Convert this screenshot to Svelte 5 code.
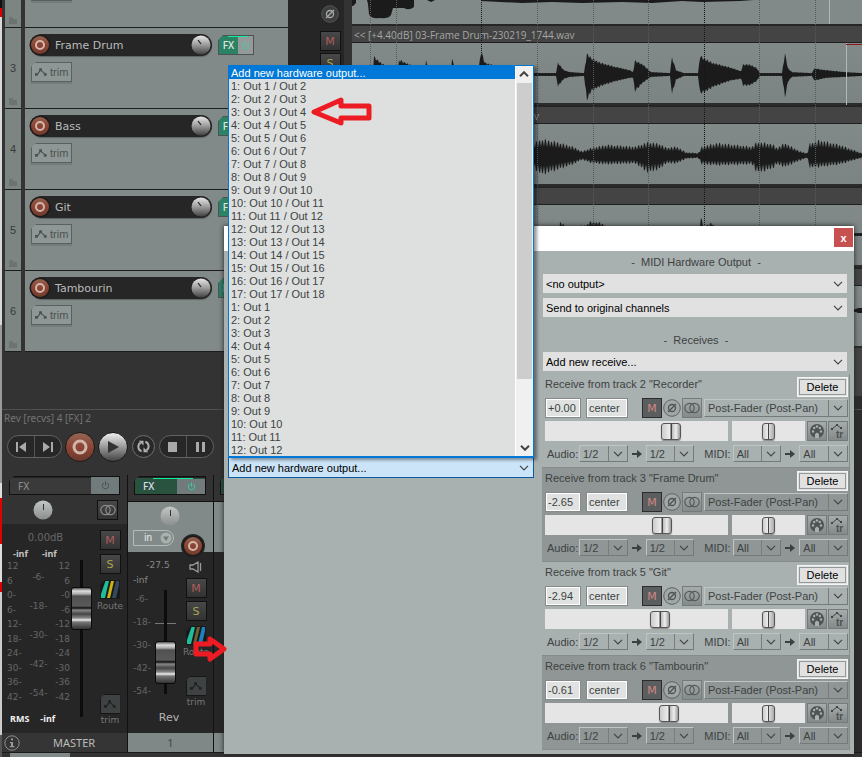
<script lang="ts">
    type Key = [number, number, number];

    const tracks = [
        { id: 2, name: "Recorder" },
        { id: 3, name: "Frame Drum" },
        { id: 4, name: "Bass" },
        { id: 5, name: "Git" },
        { id: 6, name: "Tambourin" },
    ];

    const outputs = [
        "Add new hardware output...",
        ...Array.from({ length: 17 }, (_, i) => `${i + 1}: Out ${i + 1} / Out ${i + 2}`),
        ...Array.from({ length: 12 }, (_, i) => `${i + 1}: Out ${i + 1}`),
    ];

    const receives = [
        { track: 2, name: "Recorder", volume: "+0.00", level: 710 },
        { track: 3, name: "Frame Drum", volume: "-2.65", level: 655 },
        { track: 5, name: "Git", volume: "-2.94", level: 647 },
        { track: 6, name: "Tambourin", volume: "-0.61", level: 697 },
    ];

    const leftScale = ["12", "6", "0-", "6-", "12-", "18-", "24-", "30-", "36-", "42-"];
    const midScale = ["-6-", "-18-", "-30-", "-42-", "-54-"];
    const rightScale = ["12", "6", "-0", "-6", "-12", "-18", "-24", "-30", "-36", "-42"];

    const gridLines = [18, 44, 129, 185, 241, 296, 352, 407, 463];
    const lanes = [0, 81, 162, 243];

    // [x, amplitude up, amplitude down]
    const drum: Key[] = [
        [0, 1, 1], [21, 1, 1], [22, 18, 18], [30, 11, 10], [37, 7, 5], [46, 3, 2], [47, 15, 13], [60, 9, 6], [64, 2, 2],
        [73, 2, 2], [74, 15, 12], [78, 2, 2], [99, 1, 1], [100, 16, 14], [105, 2, 2], [126, 1, 1], [129, 24, 24],
        [133, 12, 12], [142, 9, 8], [152, 2, 2], [180, 1, 1], [204, 1, 1], [206, 12, 12], [212, 4, 4], [218, 2, 2],
        [232, 1, 1], [235, 22, 27], [239, 17, 17], [248, 12, 12], [262, 8, 7], [278, 4, 3], [281, 2, 3], [283, 14, 17],
        [291, 10, 8], [299, 2, 2], [318, 1, 1], [320, 18, 20], [324, 4, 5], [332, 1, 1], [346, 1, 1], [348, 19, 19],
        [353, 16, 18], [360, 12, 13], [378, 7, 6], [389, 3, 4], [391, 10, 11], [398, 10, 11], [405, 6, 6], [408, 1, 1],
        [430, 1, 1], [433, 22, 24], [436, 6, 7], [440, 2, 2], [460, 1, 1], [462, 6, 6], [475, 4, 3], [494, 2, 2], [510, 1, 1],
    ];
    const bass: Key[] = [
        [0, 8, 8], [180, 12, 12], [190, 17, 20], [205, 14, 15], [221, 9, 9], [230, 4, 4], [240, 8, 8], [255, 11, 9],
        [283, 9, 8], [296, 14, 18], [308, 12, 14], [314, 8, 8], [325, 9, 8], [334, 3, 3], [346, 2, 2], [350, 9, 9],
        [365, 13, 10], [400, 9, 9], [405, 14, 18], [420, 12, 14], [425, 8, 9], [433, 13, 12], [448, 4, 5], [455, 2, 2],
        [458, 13, 13], [468, 16, 12], [488, 11, 9], [510, 2, 2],
    ];
    const git: Key[] = [
        [0, 1, 1], [207, 1, 1], [208, 13, 6], [214, 8, 6], [234, 9, 8], [238, 13, 10], [248, 12, 10], [262, 4, 4],
        [346, 2, 2], [349, 17, 12], [352, 8, 8], [360, 12, 8], [366, 3, 3], [510, 1, 1],
    ];
    const tambourin: Key[] = [[0, 1, 1], [504, 1, 1], [506, 2, 2], [510, 2, 2]];

    function wave(keys: Key[], mid: number, rough: number) {
        const up: string[] = [];
        const down: string[] = [];
        let k = 0;
        for (let x = 0; x <= 510; x++) {
            while (k < keys.length - 2 && keys[k + 1][0] <= x) k++;
            const [x0, u0, d0] = keys[k];
            const [x1, u1, d1] = keys[k + 1];
            const t = Math.min(1, Math.max(0, (x - x0) / (x1 - x0)));
            const noise = x % 3 === 0 ? 1 - rough : 1 - rough * 0.3 * Math.abs(Math.sin(x * 0.7));
            up.push(`${x},${(mid - (u0 + (u1 - u0) * t) * noise).toFixed(1)}`);
            down.unshift(`${x},${(mid + (d0 + (d1 - d0) * t) * noise + 1).toFixed(1)}`);
        }
        return [...up, ...down].join(" ");
    }

    const waves = [wave(drum, 74, 0.2), wave(bass, 155, 0.5), wave(git, 234, 0.3), wave(tambourin, 310, 0)];
</script>

{#snippet recordIcon()}
    <svg viewBox="0 0 22 22" class="rec-icon">
        <circle cx="11" cy="11" r="10.5" fill="#1d1a19" />
        <circle cx="11" cy="11" r="9" fill="url(#recFill)" />
        <circle cx="11" cy="11" r="4" fill="none" stroke="#d5b5ac" stroke-width="2" />
    </svg>
{/snippet}

{#snippet power()}
    <svg viewBox="0 0 10 10" class="power">
        <path d="M3 2.2A3.5 3.5 0 1 0 7 2.2M5 .5V5" fill="none" stroke="currentColor" />
    </svg>
{/snippet}

{#snippet envelope()}
    <svg viewBox="0 0 14 10" class="envelope">
        <path d="M2 8L6 3L11 7" fill="none" stroke="currentColor" stroke-width="1.3" />
        <path d="M0 6h3v3H0zM4.5 1h3v3h-3zM9.5 6h3v3h-3z" fill="currentColor" />
    </svg>
{/snippet}

{#snippet rings()}
    <svg viewBox="0 0 16 12" class="rings">
        <g fill="none" stroke="currentColor" stroke-width="1.2"><circle cx="5.5" cy="6" r="4.7" /><circle cx="10.5" cy="6" r="4.7" /></g>
    </svg>
{/snippet}

{#snippet phase()}
    <svg viewBox="0 0 18 18" class="phase">
        <circle cx="9" cy="9" r="8.3" class="phase-disc" />
        <g fill="none" stroke="currentColor" stroke-width="1.3"><circle cx="9" cy="9" r="3.5" /><path d="M5 13L13 5" /></g>
    </svg>
{/snippet}

{#snippet chevron()}
    <svg viewBox="0 0 10 6" class="chevron"><path d="M1 .8L5 4.8L9 .8" fill="none" stroke="currentColor" stroke-width="1.2" /></svg>
{/snippet}

{#snippet routeIcon(last: string, mid: string)}
    <svg viewBox="0 0 20 19" class="route-icon">
        <path d="M5 0H20V19H0V5Z" fill="#191919" />
        <path d="M5.5 1H9L5 18H1V14Z" fill="#20bd9c" />
        <path d="M11 1H14L10 18H7Z" fill={mid} />
        <path d="M16 1H19V5L16 18H12Z" fill={last} />
    </svg>
{/snippet}

{#snippet combo(label: string, text: string, kind: string)}
    <span class="combo {kind}">
        <select aria-label={label}><option>{text}</option></select>
        {@render chevron()}
    </span>
{/snippet}

{#snippet arrow()}
    <svg viewBox="0 0 10 8" class="arrow"><path d="M0 3H5V0L10 4L5 8V5H0Z" fill="#3b4040" /></svg>
{/snippet}

<svg class="defs" aria-hidden="true">
    <defs>
        <linearGradient id="recFill" x2="0" y2="1"><stop offset="0" stop-color="#92624f" /><stop offset=".5" stop-color="#8b4433" /><stop offset="1" stop-color="#713c30" /></linearGradient>
        <linearGradient id="knobFill" x2="0" y2="1"><stop offset="0" stop-color="#e8e8e8" /><stop offset=".5" stop-color="#9a9a9a" /><stop offset="1" stop-color="#424242" /></linearGradient>
        <linearGradient id="panFill" x2="0" y2="1"><stop offset="0" stop-color="#c3c7c6" /><stop offset="1" stop-color="#8a8f8e" /></linearGradient>
    </defs>
</svg>

<div class="app">
    <div class="edge"></div>
    <main>
        <div class="upper">
            <div class="tcp">
                {#each tracks as track}
                    <div class="track">
                        <div class="track-number">
                            <span>{track.id}</span>
                            <svg viewBox="0 0 8 7" class="folder"><path d="M0 0H4V2H8V7H0Z" fill="#6c7472" /></svg>
                        </div>
                        <div class="track-panel">
                            <div class="track-line">
                                <div class="name-bar">
                                    <button aria-label="Record arm">{@render recordIcon()}</button>
                                    <span>{track.name}</span>
                                    <button class="knob" aria-label="Volume">
                                        <svg viewBox="0 0 22 22">
                                            <circle cx="11" cy="11" r="10.5" fill="#262626" />
                                            <circle cx="11" cy="11" r="9.5" fill="url(#knobFill)" />
                                            <path d="M8 6L11 10" stroke="#222" stroke-width="1.2" />
                                        </svg>
                                    </button>
                                </div>
                                <button class="fx-chip" aria-label="FX"><b>FX</b><i>{@render power()}</i></button>
                            </div>
                            <button class="trim-chip">{@render envelope()}trim</button>
                        </div>
                    </div>
                {/each}
            </div>
            <div class="side">
                <button class="plain" aria-label="Phase">{@render phase()}</button>
                <button class="sq mute">M</button>
                <button class="sq solo">S</button>
            </div>
            <div class="arrange">
                {#each lanes as lane}
                    <div class="item-title">
                        {#if lane === 0}&lt;&lt; [+4.40dB] 03-Frame Drum-230219_1744.wav{:else if lane === 81}<span class="item-tail">v</span>{/if}
                    </div>
                    <div class="item-body"></div>
                {/each}
                <svg class="waves" width="510" height="352" viewBox="0 0 510 352">
                    <g fill="#1b1b1b">
                        <path d="M0 0H4V3L1 6H0ZM15 0H62V7Q57 11 52 8H41L39 15Q36 19 28 18Q18 19 17 14L16 4ZM75 0H83L79 2ZM129 0H402L388 1L350 2L330 1L300 3L270 2L230 3L200 2L170 3L129 1Z" />
                        {#each waves as points}<polygon {points} />{/each}
                    </g>
                    {#each gridLines as x}
                        <path d="M{x}.5 0V340" stroke={x === 129 || x === 352 ? "#161616" : "#555c5b"} stroke-dasharray="1 1" />
                    {/each}
                    <path d="M477.5 0V24M494.5 43V105" stroke="#b3b8b7" />
                    <path d="M494 44.5H510" stroke="#8e1318" />
                </svg>
            </div>
        </div>

        <div class="transport">
            <p>Rev [recvs] 4 [FX] 2</p>
            <div class="transport-buttons">
                <div class="pill">
                    <button aria-label="Go to start"><svg viewBox="0 0 12 10"><path d="M1 0H3V10H1ZM11 0V10L4 5Z" fill="#a9a9a9" /></svg></button>
                    <button aria-label="Go to end"><svg viewBox="0 0 12 10"><path d="M9 0H11V10H9ZM1 0V10L8 5Z" fill="#a9a9a9" /></svg></button>
                </div>
                <button class="round big red" aria-label="Record">
                    <svg viewBox="0 0 28 28"><circle cx="14" cy="14" r="6" fill="none" stroke="#d3b4aa" stroke-width="3" /></svg>
                </button>
                <button class="round big silver" aria-label="Play">
                    <svg viewBox="0 0 28 28"><path d="M9 8L20 14L9 20Z" fill="#333" /></svg>
                </button>
                <button class="round" aria-label="Repeat">
                    <svg viewBox="0 0 22 22">
                        <g fill="none" stroke="#b0b0b0" stroke-width="2"><path d="M9 16A5 5 0 0 1 8 7" /><path d="M13 6A5 5 0 0 1 14 15" /></g>
                        <path d="M6 5H11V10ZM16 17H11V12Z" fill="#b0b0b0" />
                    </svg>
                </button>
                <div class="pill">
                    <button aria-label="Stop"><svg viewBox="0 0 12 10"><path d="M1 0H10V10H1Z" fill="#a9a9a9" /></svg></button>
                    <button aria-label="Pause"><svg viewBox="0 0 12 10"><path d="M2 0H5V10H2ZM8 0H11V10H8Z" fill="#a9a9a9" /></svg></button>
                </div>
            </div>
        </div>

        <div class="mixer">
            <section class="strip master">
                <button class="fx-bar" aria-label="Master FX"><b>FX</b><i>{@render power()}</i></button>
                <div class="strip-head">
                    <button class="pan" aria-label="Pan">
                        <svg viewBox="0 0 20 20"><circle cx="10" cy="10" r="9.5" fill="url(#panFill)" /><path d="M10.5 4V10" stroke="#333" /></svg>
                    </button>
                    <button class="sq" aria-label="Stereo">{@render rings()}</button>
                </div>
                <div class="strip-body">
                    <div class="meter">
                        <div class="db">0.00dB</div>
                        <div class="peaks"><b>-inf</b><b>-inf</b></div>
                        <div class="scales">
                            <div class="scale">{#each leftScale as mark}<span>{mark}</span>{/each}</div>
                            <div class="scale mid">{#each midScale as mark}<span>{mark}</span>{/each}</div>
                            <div class="scale end">{#each rightScale as mark}<span>{mark}</span>{/each}</div>
                        </div>
                        <div class="rms"><b>RMS</b><b>-inf</b></div>
                    </div>
                    <input class="fader" type="range" aria-label="Master volume" value="76" />
                    <div class="strip-buttons">
                        <button class="sq mute">M</button>
                        <button class="sq solo">S</button>
                        <button class="route">{@render routeIcon("#34495a", "#c9b414")}Route</button>
                        <button class="trim">{@render envelope()}<span>trim</span></button>
                    </div>
                </div>
                <footer>
                    <svg viewBox="0 0 16 16" class="info">
                        <circle cx="8" cy="8" r="7.2" fill="none" stroke="#8d8d8d" />
                        <path d="M7 3.5H9V5.2H7ZM6 7H9V11H10.5V12.2H5.8V11H7V8.2H6Z" fill="#999" />
                    </svg>
                    <span>MASTER</span>
                </footer>
            </section>

            <section class="strip rev">
                <button class="fx-bar on" aria-label="Rev FX"><b>FX</b><i>{@render power()}</i></button>
                <div class="strip-head">
                    <button class="pan" aria-label="Pan">
                        <svg viewBox="0 0 20 20"><circle cx="10" cy="10" r="9.5" fill="url(#panFill)" /><path d="M10.5 4V10" stroke="#333" /></svg>
                    </button>
                    <button class="input">
                        in
                        <svg viewBox="0 0 12 12"><circle cx="6" cy="6" r="5.5" fill="#a9b0ae" /><path d="M3 4.5H9L6 9Z" fill="#727b79" /></svg>
                    </button>
                    <button class="arm" aria-label="Record arm">{@render recordIcon()}</button>
                </div>
                <div class="strip-body">
                    <div class="level">
                        <div>-27.5</div>
                        <div class="left">-inf</div>
                        <div class="fader-row">
                            <div class="scale mid">{#each midScale as mark}<span>{mark}</span>{/each}</div>
                            <input class="fader" type="range" aria-label="Rev volume" value="17" />
                        </div>
                        <div class="strip-name">Rev</div>
                    </div>
                    <div class="strip-buttons">
                        <svg viewBox="0 0 14 12" class="speaker">
                            <path d="M1 4H4L9 1V11L4 8H1ZM11.5 2V10" fill="none" stroke="#9a9a9a" stroke-width="1.3" />
                        </svg>
                        <button class="sq mute">M</button>
                        <button class="sq solo">S</button>
                        <button class="route">{@render routeIcon("#1d7fc4", "#6a6033")}Route</button>
                        <button class="trim">{@render envelope()}<span>trim</span></button>
                    </div>
                </div>
                <footer>1</footer>
            </section>

            <section class="strip rest">
                <button class="fx-bar on" aria-label="FX"></button>
                <div class="strip-head"></div>
                <div class="strip-body"></div>
                <footer></footer>
            </section>
        </div>
        <div class="bottom"><span></span></div>
    </main>

    <div class="dialog" role="dialog" aria-label="Routing">
        <div class="title-bar"><button aria-label="Close">x</button></div>
        <div class="dialog-body">
            <div class="sends">
                <div class="picker">
                    {@render combo("Hardware output", "Add new hardware output...", "open")}
                    <div class="popup">
                        <ul role="listbox" aria-label="Hardware outputs">
                            {#each outputs as output, i}
                                <li role="option" aria-selected={i === 0} class:selected={i === 0}>{output}</li>
                            {/each}
                        </ul>
                        <div class="scrollbar">
                            <span class="flip">{@render chevron()}</span>
                            <div class="thumb"></div>
                            <span>{@render chevron()}</span>
                        </div>
                    </div>
                </div>
            </div>
            <div class="receives">
                <h2>-&nbsp; MIDI Hardware Output &nbsp;-</h2>
                {@render combo("MIDI output", "<no output>", "wide")}
                {@render combo("MIDI channels", "Send to original channels", "wide")}
                <h2 class="second">-&nbsp; Receives &nbsp;-</h2>
                {@render combo("New receive", "Add new receive...", "wide")}
                <div class="blocks">
                    {#each receives as receive, i}
                        <div class="block" class:dark={i % 2 === 1}>
                            <div class="row first">
                                <span>Receive from track {receive.track} "{receive.name}"</span>
                                <button class="delete">Delete</button>
                            </div>
                            <div class="row">
                                <input class="value" aria-label="Volume" value={receive.volume} />
                                <input class="value wider" aria-label="Pan" value="center" />
                                <button class="m">M</button>
                                <button class="plain" aria-label="Phase">{@render phase()}</button>
                                <button class="small" aria-label="Mono">{@render rings()}</button>
                                {@render combo("Send mode", "Post-Fader (Post-Pan)", "flat grow")}
                            </div>
                            <div class="row third">
                                <input type="range" class="slider" aria-label="Receive level" min="0" max="1000" value={receive.level} />
                                <input type="range" class="slider narrow" aria-label="Receive pan" value="50" />
                                <button class="small" aria-label="MIDI settings">
                                    <svg viewBox="0 0 16 16" width="16" height="16">
                                        <circle cx="8" cy="8" r="7" fill="#4e5453" />
                                        <g fill="#a9afae"><circle cx="4" cy="8.5" r="1.2" /><circle cx="5.2" cy="5" r="1.2" /><circle cx="8" cy="3.5" r="1.2" /><circle cx="10.8" cy="5" r="1.2" /><circle cx="12" cy="8.5" r="1.2" /><path d="M6 15V11L8 9.5L10 11V15Z" /></g>
                                    </svg>
                                </button>
                                <button class="small" aria-label="Envelope">
                                    <svg viewBox="0 0 18 18" width="18" height="18">
                                        <path d="M3 7L8 3L12 6" fill="none" stroke="#3f4545" />
                                        <path d="M2 6h2v2H2zM7 2h2v2H7zM11 5h2v2h-2z" fill="#3f4545" />
                                        <text x="7" y="16" class="tr">tr</text>
                                    </svg>
                                </button>
                            </div>
                            <div class="row fourth">
                                <span class="caption">Audio:</span>
                                {@render combo("Audio source", "1/2", "flat short")}
                                {@render arrow()}
                                {@render combo("Audio destination", "1/2", "flat short")}
                                <span class="caption midi">MIDI:</span>
                                {@render combo("MIDI source", "All", "flat short")}
                                {@render arrow()}
                                {@render combo("MIDI destination", "All", "flat short")}
                            </div>
                        </div>
                    {/each}
                </div>
            </div>
        </div>
    </div>

    <svg class="mark mark-list" viewBox="0 0 62 30" width="62" height="30">
        <path d="M3 15L30 3V9H58V21H30V26Z" fill="none" stroke="#ed1c24" stroke-width="5" stroke-linejoin="round" />
    </svg>
    <svg class="mark mark-route" viewBox="0 0 36 26" width="36" height="26">
        <path d="M4 8H18V3L32 13L18 23V18H4Z" fill="none" stroke="#ed1c24" stroke-width="5" stroke-linejoin="round" />
    </svg>
</div>

<style>
    :global(body) {
        background: #333;
    }

    .app {
        position: relative;
        display: flex;
        min-height: 100vh;
        overflow: hidden;
        background: #333;
        font-family: "Liberation Sans", Arial, sans-serif;
        font-size: 11px;
        color: #777;
    }

    button,
    input,
    select {
        box-sizing: border-box;
        margin: 0;
        padding: 0;
        border: 0;
        border-radius: 0;
        background: none;
        font: inherit;
        color: inherit;
    }

    svg {
        display: block;
        flex: none;
    }

    .defs {
        position: absolute;
        width: 0;
        height: 0;
    }

    .edge {
        width: 2px;
        background: linear-gradient(#111 8px, #d00 8px 17px, #d8d8d8 17px 325px, #9a9a9a 325px 483px, #ddd 483px 498px, #e00000 498px 544px, #ddd 544px 582px, #d00 582px 592px, #ccc 592px 735px, #555 735px);
    }

    main {
        flex: 1;
        min-width: 0;
    }

    .upper {
        display: flex;
        height: 409px;
        overflow: hidden;
        background: #333;
    }

    .tcp {
        width: 286px;
        margin-top: -53px;
        padding-left: 3px;
        box-sizing: border-box;
    }

    .track {
        display: flex;
        gap: 4px;
        height: 81px;
    }

    .track-number {
        display: flex;
        flex-direction: column;
        align-items: center;
        justify-content: space-between;
        width: 16px;
        padding: 34px 0 3px;
        box-sizing: border-box;
        border-bottom: 1px solid #1c1c1c;
        background: #7d8583;
        color: #363b3a;
    }

    .folder {
        width: 8px;
        height: 7px;
    }

    .track-panel {
        flex: 1;
        padding: 6px 0 0 6px;
        border-bottom: 1px solid #1c1c1c;
        background: #818a88;
    }

    .track-line {
        display: flex;
        align-items: center;
        gap: 6px;
        margin-bottom: 6px;
    }

    .name-bar {
        display: flex;
        align-items: center;
        width: 181px;
        height: 22px;
        border-radius: 11px;
        background: #262626;
        box-shadow: 0 1px 1px #5d6462;
    }

    .name-bar span {
        flex: 1;
        padding-left: 4px;
        font-family: "DejaVu Sans", sans-serif;
        color: #b9bbba;
    }

    .rec-icon,
    .knob svg {
        width: 22px;
        height: 22px;
    }

    .name-bar button {
        margin-left: -2px;
    }

    .fx-chip {
        display: flex;
        width: 36px;
        height: 20px;
        border: 1px solid #4c5352;
        background: #939a99;
        clip-path: polygon(5px 0, 100% 0, 100% 100%, 0 100%, 0 5px);
        color: #3fd3a6;
    }

    .fx-chip b,
    .fx-bar b {
        font-family: "Noto Sans", sans-serif;
        font-size: 10px;
        line-height: 18px;
        font-weight: 500;
    }

    .fx-chip b {
        flex: 1;
        background: linear-gradient(90deg, transparent 9px, #10ef9b 9px) top / 100% 1px no-repeat, #2c8264;
        color: #e2e8e5;
    }

    .fx-chip i {
        display: grid;
        place-items: center;
        width: 15px;
        height: 18px;
        background: linear-gradient(90deg, #10ef9b 10px, transparent 10px) top / 100% 1px no-repeat;
    }

    .power {
        width: 9px;
        height: 9px;
    }

    .trim-chip {
        display: flex;
        align-items: center;
        gap: 2px;
        width: 41px;
        height: 20px;
        padding-left: 3px;
        border: 1px solid #596160;
        background: #8f9796;
        box-shadow: 0 2px 0 #747c7a;
        color: #4b5251;
        clip-path: polygon(5px 0, 100% 0, 100% 22px, 0 22px, 0 5px);
    }

    .envelope {
        width: 13px;
        height: 10px;
    }

    .side {
        display: flex;
        flex-direction: column;
        align-items: center;
        gap: 2px;
        width: 28px;
        padding: 5px 0 0 28px;
        border-right: 8px solid #333;
        background: #262626;
        color: #aaa;
    }

    .side .plain {
        margin-bottom: 6px;
    }

    .phase {
        width: 18px;
        height: 18px;
    }

    .phase-disc {
        fill: #3c3e3e;
        stroke: #555;
    }

    .sq {
        display: grid;
        place-items: center;
        width: 21px;
        height: 20px;
        flex: none;
        border: 1px solid #111;
        background: linear-gradient(#484848, #333);
        font-family: "DejaVu Sans", sans-serif;
        font-size: 11px;
        color: #8c8c8c;
    }

    .mute {
        color: #ad5c5b;
    }

    .solo {
        color: #aaa54b;
    }

    .rings {
        width: 16px;
        height: 12px;
    }

    .arrange {
        position: relative;
        flex: 1;
        overflow: hidden;
        padding-top: 24px;
        background: linear-gradient(#818a88 24px, #444 24px 396px, #2d2d2d 396px);
    }

    .item-title {
        height: 16px;
        padding-left: 2px;
        border-top: 2px solid #262626;
        border-bottom: 1px solid #1f1f1f;
        background: #444;
        font-family: "Open Sans", sans-serif;
        font-size: 10px;
        line-height: 18px;
        color: #a4a8a7;
    }

    .item-tail {
        padding-left: 180px;
    }

    .item-body {
        height: 60px;
        border-bottom: 2px solid #2b2d2d;
        background: linear-gradient(#818a88, #7b8483);
    }

    .waves {
        position: absolute;
        left: 0;
        top: 0;
    }

    .transport {
        height: 66px;
        padding-left: 2px;
        border-top: 1px solid #505050;
        box-sizing: border-box;
        background: linear-gradient(90deg, #333 80%, #2d2d2d 80%);
    }

    .transport p {
        margin: 0;
        line-height: 16px;
        font-family: "Noto Sans", sans-serif;
        font-size: 10px;
        color: #747474;
    }

    .transport-buttons {
        display: flex;
        align-items: center;
        gap: 3px;
        height: 41px;
        padding-left: 3px;
    }

    .pill {
        display: flex;
        width: 55px;
        height: 23px;
        border: 1px solid #626262;
        border-radius: 12px;
        box-sizing: border-box;
        background: #272727;
    }

    .pill button {
        display: grid;
        place-items: center;
        flex: 1;
    }

    .pill button + button {
        border-left: 1px solid #555;
    }

    .pill svg {
        width: 12px;
        height: 10px;
    }

    .round {
        width: 23px;
        height: 23px;
        margin: 0 1px;
        border: 1px solid #707070;
        border-radius: 50%;
        background: #292929;
    }

    .big {
        width: 30px;
        height: 30px;
        margin: 0;
        border: 1px solid #1b1b1b;
    }

    .red {
        background: linear-gradient(#946554, #8c4535 50%, #6c392e);
    }

    .silver {
        background: linear-gradient(#eee, #999 50%, #444);
    }

    .mixer {
        display: flex;
        background: #2d2d2d;
    }

    .strip {
        display: flex;
        flex-direction: column;
        width: 125px;
        border-right: 1px solid #111;
        background: #262626;
    }

    .rev {
        width: 85px;
    }

    .rest {
        width: 60px;
        overflow: hidden;
    }

    .fx-bar {
        position: relative;
        display: flex;
        width: 111px;
        height: 19px;
        margin: 1px 0 0 7px;
        border: 1px solid #111;
        background: #3a3a3a;
        box-shadow: inset 0 1px #222;
        clip-path: polygon(5px 0, 100% 0, 100% 100%, 0 100%, 0 5px);
        color: #858a89;
    }

    .rev .fx-bar,
    .rest .fx-bar {
        width: 72px;
        margin-left: 6px;
    }

    .fx-bar b {
        flex: 1;
        padding-left: 8px;
        text-align: left;
    }

    .fx-bar i {
        display: grid;
        place-items: center;
        width: 28px;
        height: 17px;
        background: #727b7b;
        color: #454a4a;
    }

    .fx-bar.on {
        background: linear-gradient(90deg, transparent 18px, #10ef9b 18px 58px, transparent 58px) top / 100% 2px no-repeat, #29533f;
        color: #dde;
    }

    .fx-bar.on i {
        margin-top: 2px;
        height: 15px;
        color: #2bdca6;
    }

    .strip-head {
        display: flex;
        align-items: center;
        justify-content: space-between;
        height: 29px;
        padding: 0 9px 0 31px;
        background: #333;
        box-shadow: 0 -20px 0 #333;
    }

    .pan,
    .pan svg {
        width: 20px;
        height: 20px;
    }

    .rev .strip-head,
    .rest .strip-head {
        flex-wrap: wrap;
        align-content: flex-start;
        height: 51px;
        margin-top: 6px;
        padding: 4px 9px 0 5px;
        box-sizing: border-box;
        border-top: 1px solid #111;
        background: #818a88;
        box-shadow: 0 -26px 0 #333;
    }

    .rev .pan {
        margin: 0 20px 3px 27px;
    }

    .input {
        display: flex;
        align-items: center;
        justify-content: flex-end;
        gap: 8px;
        width: 41px;
        height: 16px;
        border: 1px solid #b5bbb9;
        border-radius: 0 8px 8px 0;
        padding-right: 1px;
        font-size: 10px;
        color: #e8eceb;
    }

    .input svg {
        width: 12px;
        height: 12px;
    }

    .arm {
        align-self: flex-start;
        height: 22px;
        margin: 6px 0 -11px;
        border-radius: 50%;
        background: #262626;
        box-shadow: 0 0 0 1px #262626;
    }

    .strip-body {
        display: flex;
        flex: 1;
        box-sizing: border-box;
    }

    .master .strip-body {
        min-height: 209px;
        padding: 6px 0 0 2px;
    }

    .meter {
        width: 66px;
    }

    .db {
        padding: 0 0 4px 17px;
        line-height: 15px;
        text-align: center;
        font-family: "DejaVu Sans", sans-serif;
        font-size: 10px;
        color: #686868;
    }

    .peaks,
    .rms {
        display: flex;
        gap: 14px;
        padding-left: 9px;
        font-family: "Noto Sans", sans-serif;
        font-size: 9px;
        line-height: 10px;
        color: #c5c5c5;
    }

    .rms {
        padding: 6px 0 0 6px;
        gap: 11px;
        color: #f0f0f0;
    }

    .scales {
        display: flex;
        align-items: flex-start;
        justify-content: space-between;
        padding-left: 3px;
    }

    .scale {
        display: flex;
        flex-direction: column;
        justify-content: space-between;
        height: 145px;
        font-family: "DejaVu Sans", sans-serif;
        font-size: 9px;
        line-height: 14px;
        color: #666;
    }

    .scale.end {
        text-align: right;
    }

    .scale.mid {
        height: auto;
        line-height: 29px;
        padding-top: 4px;
        text-align: center;
    }

    .fader {
        appearance: none;
        writing-mode: vertical-lr;
        direction: rtl;
        width: 21px;
        height: 157px;
        margin: 30px 5px 0 1px;
        background: linear-gradient(#0c0c0c, #0c0c0c) center / 3px 100% no-repeat;
    }

    .fader::-webkit-slider-thumb {
        appearance: none;
        box-sizing: border-box;
        width: 21px;
        height: 43px;
        border: 1px solid #0a0a0a;
        border-radius: 3px;
        background: linear-gradient(#555, #ddd 3px, #aaa 6px, #505050 8px, #5a5a5a 18px, #111 20px, #888 22px, #444 26px, #888 30px, #eee 32px, #777 34px, #333);
    }

    .strip-buttons {
        display: flex;
        flex-direction: column;
        align-items: center;
        gap: 4px;
        font-family: "DejaVu Sans", sans-serif;
        font-size: 9px;
        color: #777;
    }

    .master .strip-buttons {
        height: 196px;
    }

    .route {
        padding-top: 2px;
    }

    .route-icon {
        width: 20px;
        height: 19px;
        margin: 0 auto 2px;
    }

    .trim .envelope {
        box-sizing: border-box;
        width: 21px;
        height: 20px;
        padding: 3px;
        border: 1px solid #161616;
        background: #3e4242;
        color: #222;
        clip-path: polygon(5px 0, 100% 0, 100% 100%, 0 100%, 0 5px);
    }

    .trim {
        margin-top: auto;
    }

    .trim span {
        line-height: 12px;
    }

    footer {
        display: flex;
        align-items: center;
        height: 19px;
        background: #353535;
        font-family: "Noto Sans", sans-serif;
        color: #bbb;
    }

    .info {
        width: 16px;
        height: 16px;
        margin: 0 33px 0 2px;
    }

    .rev footer,
    .rest footer {
        justify-content: center;
        background: #7f8886;
        color: #3f4443;
    }

    .level {
        width: 50px;
        padding: 6px 0 0 5px;
        font-family: "DejaVu Sans", sans-serif;
        font-size: 9px;
        line-height: 15px;
        text-align: center;
        color: #888;
    }

    .left {
        text-align: left;
    }

    .fader-row {
        display: flex;
    }

    .fader-row .scale.mid {
        line-height: 23px;
        padding: 0;
    }

    .fader-row .fader {
        height: 104px;
        margin: 2px 0 0 4px;
        background: linear-gradient(#0c0c0c, #0c0c0c) center / 3px 100% no-repeat, linear-gradient(transparent 33px, #777 33px 34px, transparent 34px);
    }

    .strip-name {
        padding: 7px 0 0 22px;
        font-size: 11px;
        color: #b5b5b5;
    }

    .rev .strip-buttons {
        gap: 3px;
        height: 147px;
        margin-top: 9px;
    }

    .speaker {
        width: 14px;
        height: 12px;
        margin-bottom: 2px;
    }

    .bottom {
        height: 5px;
        border-top: 1px solid #1b1b1b;
        box-sizing: border-box;
    }

    .bottom span {
        display: block;
        width: 60px;
        height: 4px;
        margin-left: 8px;
        background: #808987;
    }

    .dialog {
        position: absolute;
        left: 224px;
        right: 8px;
        top: 226px;
        background: #a9b0b0;
        color: #3d4242;
        box-shadow: 0 0 5px #222;
    }

    .title-bar {
        display: flex;
        justify-content: flex-end;
        height: 25px;
        background: #fff;
    }

    .title-bar button {
        width: 19px;
        height: 19px;
        margin: 2px 1px;
        background: #c75050;
        font-weight: bold;
        color: #fff;
    }

    .dialog-body {
        display: grid;
        grid-template-columns: minmax(0, 1fr) minmax(0, 1fr);
        gap: 9px;
        padding: 0 5px 4px 4px;
    }

    .picker {
        position: relative;
        margin-top: 206px;
    }

    .combo {
        position: relative;
        display: flex;
        align-items: center;
        box-sizing: border-box;
    }

    .combo select {
        appearance: none;
        width: 100%;
        height: 100%;
        padding-left: 3px;
    }

    .chevron {
        width: 10px;
        height: 6px;
        color: #444;
    }

    .combo .chevron {
        position: absolute;
        right: 4px;
        pointer-events: none;
    }

    .open {
        height: 21px;
        border: 1px solid #0a5a9f;
        background: #cce4f7;
        color: #000;
    }

    .popup {
        position: absolute;
        left: 0;
        right: 0;
        bottom: 20px;
        display: flex;
        border: 1px solid #0078d7;
        border-bottom-width: 2px;
        background: #dde0df;
        box-shadow: 3px 2px 3px #0006;
    }

    .popup ul {
        flex: 1;
        margin: 0;
        padding: 0;
        list-style: none;
    }

    .popup li {
        height: 13px;
        padding-left: 2px;
        line-height: 15px;
        white-space: nowrap;
    }

    .popup .selected {
        background: #0078d7;
        color: #fff;
    }

    .scrollbar {
        display: flex;
        flex-direction: column;
        width: 15px;
        padding: 0 1px;
        border-left: 1px solid #fff;
        background: #f0f0f0;
    }

    .scrollbar span {
        display: grid;
        place-items: center;
        height: 17px;
    }

    .flip {
        transform: rotate(180deg);
    }

    .scrollbar path {
        stroke-width: 2;
    }

    .thumb {
        flex: none;
        height: 296px;
        margin-bottom: auto;
        background: #cdcdcd;
    }

    h2 {
        margin: 0;
        padding-top: 3px;
        font-size: 11px;
        font-weight: normal;
        line-height: 17px;
        text-align: center;
    }

    .second {
        padding-top: 10px;
    }

    .wide {
        height: 19px;
        margin: 3px 2px 5px 0;
        background: #e1e1e1;
        color: #000;
    }

    .second + .wide {
        margin-bottom: 3px;
    }

    .blocks {
        margin: 0 -1px;
    }

    .block {
        height: 94px;
        padding: 3px 1px 0 3px;
        box-sizing: border-box;
        border-right: 1px solid #858c8b;
        border-bottom: 1px solid #858c8b;
    }

    .dark {
        background: #8f9695;
    }

    .row {
        display: flex;
        align-items: center;
    }

    .first {
        align-items: flex-start;
        justify-content: space-between;
        height: 21px;
        line-height: 14px;
    }

    .delete {
        width: 51px;
        height: 20px;
        border: 1px solid #f4f4f4;
        outline: 1px solid #929998;
        outline-offset: -3px;
        background: #e1e1e1;
        color: #000;
    }

    .value {
        width: 36px;
        height: 20px;
        padding-left: 2px;
        border: 1px solid #f4f4f4;
        outline: 1px solid #858b8a;
        outline-offset: -1px;
        background: #dfe2e1;
        box-shadow: inset 0 0 0 1px #fff;
        color: #3d4242;
    }

    .wider {
        width: 42px;
        margin: 0 14px 0 5px;
    }

    .m {
        width: 20px;
        height: 20px;
        border: 1px solid #2c2c2c;
        background: #5b5e5e;
        font-family: "DejaVu Sans", sans-serif;
        color: #d08684;
    }

    .block .plain {
        margin: 0 1px;
        color: #4c5251;
    }

    .block .phase-disc {
        fill: #a1a7a6;
        stroke: #5d6362;
    }

    .small {
        display: grid;
        place-items: center;
        width: 20px;
        height: 20px;
        border: 1px solid #747b7a;
        background: linear-gradient(#a5acab, #838a89);
        color: #555b5a;
    }

    .tr {
        font-size: 10px;
        font-weight: bold;
        fill: #4c5251;
    }

    .flat {
        height: 18px;
        border: 1px solid #7f8685;
        border-color: #c0c5c4 #737a79 #737a79 #c0c5c4;
        background: linear-gradient(90deg, transparent calc(100% - 19px), #767d7c 0 calc(100% - 18px), transparent 0);
    }

    .grow {
        flex: 1;
        margin-left: 2px;
    }

    .third {
        gap: 1px;
        margin-top: 3px;
    }

    .slider {
        appearance: none;
        flex: 1;
        min-width: 0;
        height: 20px;
        background: #e5e5e5;
    }

    .slider::-webkit-slider-thumb {
        appearance: none;
        box-sizing: border-box;
        width: 20px;
        height: 17px;
        border: 1px solid #555;
        border-radius: 3px;
        background: linear-gradient(90deg, #ccc, #eee 8px, #444 9px 10px, #bbb 10px, #eee 14px, #999);
        box-shadow: 0 1px 1px #888;
    }

    .narrow {
        flex: none;
        width: 73px;
        margin: 0 1px 0 3px;
    }

    .narrow::-webkit-slider-thumb {
        width: 13px;
        background: linear-gradient(90deg, #ccc, #eee 5px, #444 5px 6px, #ddd 6px, #aaa);
    }

    .fourth {
        margin-top: 4px;
        gap: 4px;
    }

    .caption {
        width: 30px;
        padding-left: 2px;
        margin-right: -2px;
    }

    .midi {
        flex: 1;
        padding-left: 6px;
    }

    .short {
        width: 49px;
        height: 17px;
    }

    .arrow {
        width: 10px;
        height: 8px;
    }

    .mark {
        position: absolute;
    }

    .mark-list {
        left: 311px;
        top: 97px;
    }

    .mark-route {
        left: 192px;
        top: 636px;
    }
</style>
